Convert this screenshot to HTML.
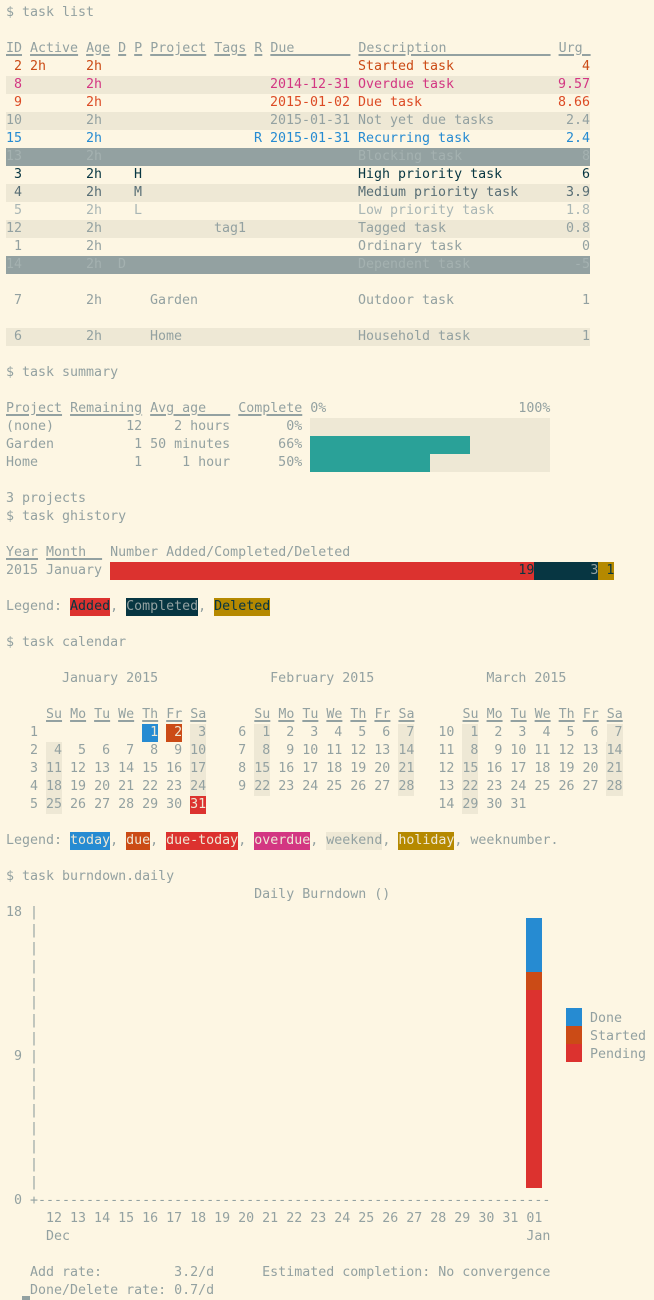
<!DOCTYPE html>
<html><head><meta charset="utf-8">
<style>
html,body{margin:0;padding:0;background:#fdf6e3;}
body{width:654px;height:1300px;overflow:hidden;position:relative;font-family:"DejaVu Sans Mono","Liberation Mono",monospace;font-size:13.3px;color:#93a1a1;}
#t{position:absolute;left:6px;top:4px;}
.l{height:18px;line-height:18px;white-space:pre;position:relative;}
.l>i{position:absolute;top:0;font-style:normal;}
.a{background:#eee8d5;width:584px;}
.g{background:#93a1a1;width:584px;color:#a4b1b0;}
.u{text-decoration:underline;text-decoration-thickness:2px;text-underline-offset:2px;}
.b{display:inline-block;height:18px;vertical-align:top;}
.w{background:#eee8d5;}
.or{color:#cb4b16}.rd{color:#dc4b25}.mg{color:#d33682}.bl{color:#268bd2}
.dk{color:#073642}.md{color:#586e75}.lt{color:#a9b6b5}
.bgb{background:#268bd2;color:#eee8d5}.bgo{background:#cb4b16;color:#eee8d5}
.bgr{background:#dc322f;color:#eee8d5}.bgm{background:#d33682;color:#eee8d5}
.bgy{background:#b58900;color:#eee8d5}
.cy{background:#2aa198}
.abs{position:absolute;}
</style></head><body>
<div id="t">
<div class="l">$ task list</div>
<div class="l"> </div>
<div class="l"><span class="u">ID</span> <span class="u">Active</span> <span class="u">Age</span> <span class="u">D</span> <span class="u">P</span> <span class="u">Project</span> <span class="u">Tags</span> <span class="u">R</span> <span class="u">Due       </span> <span class="u">Description             </span> <span class="u">Urg </span></div>
<div class="l or"><i style="left:8px">2</i><i style="left:24px">2h</i><i style="left:80px">2h</i><i style="left:352px">Started task</i><i style="left:576px">4</i></div>
<div class="l a mg"><i style="left:8px">8</i><i style="left:80px">2h</i><i style="left:264px">2014-12-31</i><i style="left:352px">Overdue task</i><i style="left:552px">9.57</i></div>
<div class="l rd"><i style="left:8px">9</i><i style="left:80px">2h</i><i style="left:264px">2015-01-02</i><i style="left:352px">Due task</i><i style="left:552px">8.66</i></div>
<div class="l a"><i style="left:0px">10</i><i style="left:80px">2h</i><i style="left:264px">2015-01-31</i><i style="left:352px">Not yet due tasks</i><i style="left:560px">2.4</i></div>
<div class="l bl"><i style="left:0px">15</i><i style="left:80px">2h</i><i style="left:248px">R</i><i style="left:264px">2015-01-31</i><i style="left:352px">Recurring task</i><i style="left:560px">2.4</i></div>
<div class="l g"><i style="left:0px">13</i><i style="left:80px">2h</i><i style="left:352px">Blocking task</i><i style="left:576px">8</i></div>
<div class="l dk"><i style="left:8px">3</i><i style="left:80px">2h</i><i style="left:128px">H</i><i style="left:352px">High priority task</i><i style="left:576px">6</i></div>
<div class="l a md"><i style="left:8px">4</i><i style="left:80px">2h</i><i style="left:128px">M</i><i style="left:352px">Medium priority task</i><i style="left:560px">3.9</i></div>
<div class="l lt"><i style="left:8px">5</i><i style="left:80px">2h</i><i style="left:128px">L</i><i style="left:352px">Low priority task</i><i style="left:560px">1.8</i></div>
<div class="l a"><i style="left:0px">12</i><i style="left:80px">2h</i><i style="left:208px">tag1</i><i style="left:352px">Tagged task</i><i style="left:560px">0.8</i></div>
<div class="l"><i style="left:8px">1</i><i style="left:80px">2h</i><i style="left:352px">Ordinary task</i><i style="left:576px">0</i></div>
<div class="l g"><i style="left:0px">14</i><i style="left:80px">2h</i><i style="left:112px">D</i><i style="left:352px">Dependent task</i><i style="left:568px">-5</i></div>
<div class="l"> </div>
<div class="l"><i style="left:8px">7</i><i style="left:80px">2h</i><i style="left:144px">Garden</i><i style="left:352px">Outdoor task</i><i style="left:576px">1</i></div>
<div class="l"> </div>
<div class="l a"><i style="left:8px">6</i><i style="left:80px">2h</i><i style="left:144px">Home</i><i style="left:352px">Household task</i><i style="left:576px">1</i></div>
<div class="l"> </div>
<div class="l">$ task summary</div>
<div class="l"> </div>
<div class="l"><span class="u">Project</span> <span class="u">Remaining</span> <span class="u">Avg age   </span> <span class="u">Complete</span> 0%                        100%</div>
<div class="l">(none)         12    2 hours       0% <span class="b w">                              </span></div>
<div class="l">Garden          1 50 minutes      66% <span class="b cy">                    </span><span class="b w">          </span></div>
<div class="l">Home            1     1 hour      50% <span class="b cy">               </span><span class="b w">               </span></div>
<div class="l"> </div>
<div class="l">3 projects</div>
<div class="l">$ task ghistory</div>
<div class="l"> </div>
<div class="l"><span class="u">Year</span> <span class="u">Month  </span> Number Added/Completed/Deleted</div>
<div class="l">2015 January <span class="b" style="background:#dc322f;color:#073642">                                                   19</span><span class="b" style="background:#073642;color:#93a1a1">       3</span><span class="b" style="background:#b58900;color:#073642"> 1</span></div>
<div class="l"> </div>
<div class="l">Legend: <span class="b" style="background:#dc322f;color:#073642">Added</span>, <span class="b" style="background:#073642;color:#93a1a1">Completed</span>, <span class="b" style="background:#b58900;color:#073642">Deleted</span></div>
<div class="l"> </div>
<div class="l">$ task calendar</div>
<div class="l"> </div>
<div class="l">       January 2015              February 2015              March 2015</div>
<div class="l"> </div>
<div class="l">     <span class="u">Su</span> <span class="u">Mo</span> <span class="u">Tu</span> <span class="u">We</span> <span class="u">Th</span> <span class="u">Fr</span> <span class="u">Sa</span>      <span class="u">Su</span> <span class="u">Mo</span> <span class="u">Tu</span> <span class="u">We</span> <span class="u">Th</span> <span class="u">Fr</span> <span class="u">Sa</span>      <span class="u">Su</span> <span class="u">Mo</span> <span class="u">Tu</span> <span class="u">We</span> <span class="u">Th</span> <span class="u">Fr</span> <span class="u">Sa</span></div>
<div class="l">   1             <span class="b bgb"> 1</span> <span class="b bgo"> 2</span> <span class="b w"> 3</span>    6 <span class="b w"> 1</span>  2  3  4  5  6 <span class="b w"> 7</span>   10 <span class="b w"> 1</span>  2  3  4  5  6 <span class="b w"> 7</span></div>
<div class="l">   2 <span class="b w"> 4</span>  5  6  7  8  9 <span class="b w">10</span>    7 <span class="b w"> 8</span>  9 10 11 12 13 <span class="b w">14</span>   11 <span class="b w"> 8</span>  9 10 11 12 13 <span class="b w">14</span></div>
<div class="l">   3 <span class="b w">11</span> 12 13 14 15 16 <span class="b w">17</span>    8 <span class="b w">15</span> 16 17 18 19 20 <span class="b w">21</span>   12 <span class="b w">15</span> 16 17 18 19 20 <span class="b w">21</span></div>
<div class="l">   4 <span class="b w">18</span> 19 20 21 22 23 <span class="b w">24</span>    9 <span class="b w">22</span> 23 24 25 26 27 <span class="b w">28</span>   13 <span class="b w">22</span> 23 24 25 26 27 <span class="b w">28</span></div>
<div class="l">   5 <span class="b w">25</span> 26 27 28 29 30 <span class="b bgr">31</span>                             14 <span class="b w">29</span> 30 31</div>
<div class="l"> </div>
<div class="l">Legend: <span class="b bgb">today</span>, <span class="b bgo">due</span>, <span class="b bgr">due-today</span>, <span class="b bgm">overdue</span>, <span class="b w">weekend</span>, <span class="b bgy">holiday</span>, weeknumber.</div>
<div class="l"> </div>
<div class="l">$ task burndown.daily</div>
<div class="l">                               Daily Burndown ()</div>
<div class="l">18 |</div>
<div class="l">   |</div>
<div class="l">   |</div>
<div class="l">   |</div>
<div class="l">   |</div>
<div class="l">   |</div>
<div class="l">   |</div>
<div class="l">   |</div>
<div class="l"> 9 |</div>
<div class="l">   |</div>
<div class="l">   |</div>
<div class="l">   |</div>
<div class="l">   |</div>
<div class="l">   |</div>
<div class="l">   |</div>
<div class="l">   |</div>
<div class="l"> 0 +----------------------------------------------------------------</div>
<div class="l">     12 13 14 15 16 17 18 19 20 21 22 23 24 25 26 27 28 29 30 31 01</div>
<div class="l">     Dec                                                         Jan</div>
<div class="l"> </div>
<div class="l">   Add rate:         3.2/d      Estimated completion: No convergence</div>
<div class="l">   Done/Delete rate: 0.7/d</div>
</div>
<div class="abs" style="left:526px;top:918px;width:16px;height:54px;background:#268bd2"></div>
<div class="abs" style="left:526px;top:972px;width:16px;height:18px;background:#cb4b16"></div>
<div class="abs" style="left:526px;top:990px;width:16px;height:198px;background:#dc322f"></div>
<div class="abs" style="left:566px;top:1008px;width:16px;height:18px;background:#268bd2"></div>
<div class="abs" style="left:566px;top:1026px;width:16px;height:18px;background:#cb4b16"></div>
<div class="abs" style="left:566px;top:1044px;width:16px;height:18px;background:#dc322f"></div>
<div class="abs l" style="left:590px;top:1010px;">Done</div>
<div class="abs l" style="left:590px;top:1028px;">Started</div>
<div class="abs l" style="left:590px;top:1046px;">Pending</div>
<div class="abs" style="left:22px;top:1296px;width:8px;height:4px;background:#93a1a1"></div>
</body></html>
